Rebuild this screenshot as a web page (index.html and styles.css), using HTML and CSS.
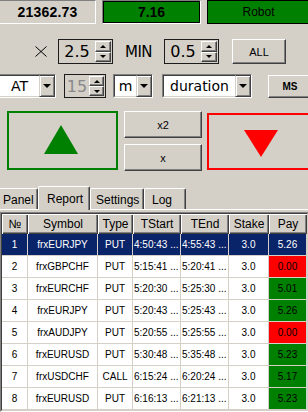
FILE: index.html
```html
<!DOCTYPE html>
<html>
<head>
<meta charset="utf-8">
<link rel="stylesheet" href="styles.css">
</head>
<body>
<div class="screen">
  <div class="row1">
    <div class="field f-bal">21362.73</div>
    <div class="field f-profit">7.16</div>
    <div class="field f-robot">Robot</div>
  </div>

  <div class="row2">
    <svg class="times" width="12" height="11" viewBox="0 0 12 11"><path d="M0.5 0.5L11.5 10.5M11.5 0.5L0.5 10.5" stroke="#000" stroke-width="1" fill="none"/></svg>
    <div class="spin s-mult">
      <span class="val">2.5</span>
      <span class="sbtns"><span class="sbtn"><i class="ar-up"></i></span><span class="sbtn"><i class="ar-dn"></i></span></span>
    </div>
    <span class="lbl">MIN</span>
    <div class="spin s-min">
      <span class="val">0.5</span>
      <span class="sbtns"><span class="sbtn"><i class="ar-up"></i></span><span class="sbtn"><i class="ar-dn"></i></span></span>
    </div>
    <div class="btn b-all">ALL</div>
  </div>

  <div class="row3">
    <div class="combo c-at"><span class="ctext">AT</span><span class="dd"><i class="ar-dd"></i></span></div>
    <div class="spin s-dur">
      <span class="val dis">15</span>
      <span class="sbtns"><span class="sbtn"><i class="ar-up"></i></span><span class="sbtn"><i class="ar-dn"></i></span></span>
    </div>
    <div class="combo c-m"><span class="ctext">m</span><span class="dd"><i class="ar-dd"></i></span></div>
    <div class="combo c-duration"><span class="ctext">duration</span><span class="dd"><i class="ar-dd"></i></span></div>
    <div class="btn b-ms">MS</div>
  </div>

  <div class="row4">
    <div class="bigbox up-box">
      <svg class="tri-up" width="34" height="29" viewBox="0 0 34 29"><polygon points="17,0 34,29 0,29" fill="#008000"/></svg>
    </div>
    <div class="mid">
      <div class="btn b-mid">x2</div>
      <div class="btn b-mid">x</div>
    </div>
    <div class="bigbox down-box">
      <svg class="tri-dn" width="34" height="27" viewBox="0 0 34 27"><polygon points="0,0 34,0 17,27" fill="#ff0000"/></svg>
    </div>
  </div>

  <div class="tabs">
    <div class="tab t-panel">Panel</div>
    <div class="tab t-report active">Report</div>
    <div class="tab t-settings">Settings</div>
    <div class="tab t-log">Log</div>
  </div>

  <div class="list">
    <div class="list-inner">
      <div class="tr head">
        <div class="th">№</div><div class="th">Symbol</div><div class="th">Type</div><div class="th">TStart</div><div class="th">TEnd</div><div class="th">Stake</div><div class="th">Pay</div>
      </div>
      <div class="tr sel">
        <div class="td">1</div><div class="td">frxEURJPY</div><div class="td">PUT</div><div class="td l">4:50:43 ...</div><div class="td l">4:55:43 ...</div><div class="td">3.0</div><div class="td">5.26</div>
      </div>
      <div class="tr">
        <div class="td">2</div><div class="td">frxGBPCHF</div><div class="td">PUT</div><div class="td l">5:15:41 ...</div><div class="td l">5:20:41 ...</div><div class="td">3.0</div><div class="td pay-loss">0.00</div>
      </div>
      <div class="tr">
        <div class="td">3</div><div class="td">frxEURCHF</div><div class="td">PUT</div><div class="td l">5:20:30 ...</div><div class="td l">5:25:30 ...</div><div class="td">3.0</div><div class="td pay-win">5.01</div>
      </div>
      <div class="tr">
        <div class="td">4</div><div class="td">frxEURJPY</div><div class="td">PUT</div><div class="td l">5:20:43 ...</div><div class="td l">5:25:43 ...</div><div class="td">3.0</div><div class="td pay-win">5.26</div>
      </div>
      <div class="tr">
        <div class="td">5</div><div class="td">frxAUDJPY</div><div class="td">PUT</div><div class="td l">5:20:55 ...</div><div class="td l">5:25:55 ...</div><div class="td">3.0</div><div class="td pay-loss">0.00</div>
      </div>
      <div class="tr">
        <div class="td">6</div><div class="td">frxEURUSD</div><div class="td">PUT</div><div class="td l">5:30:48 ...</div><div class="td l">5:35:48 ...</div><div class="td">3.0</div><div class="td pay-win">5.23</div>
      </div>
      <div class="tr">
        <div class="td">7</div><div class="td">frxUSDCHF</div><div class="td">CALL</div><div class="td l">6:15:24 ...</div><div class="td l">6:20:24 ...</div><div class="td">3.0</div><div class="td pay-win">5.17</div>
      </div>
      <div class="tr">
        <div class="td">8</div><div class="td">frxEURUSD</div><div class="td">PUT</div><div class="td l">6:16:13 ...</div><div class="td l">6:21:13 ...</div><div class="td">3.0</div><div class="td pay-win">5.23</div>
      </div>
    </div>
  </div>
</div>
</body>
</html>
```

FILE: styles.css
```css
html, body {
  margin: 0;
  padding: 0;
}
body {
  background: #d4d0c8;
  font-family: "Liberation Sans", Arial, sans-serif;
  color: #000;
  width: 308px;
  height: 412px;
  overflow: hidden;
}
.screen {
  width: 308px;
  height: 412px;
  overflow: hidden;
}

/* ---------- row 1 ---------- */
.row1 {
  display: flex;
  height: 24px;
}
.field {
  box-sizing: border-box;
  height: 24px;
  flex-shrink: 0;
  display: flex;
  align-items: center;
  justify-content: center;
}
.f-bal {
  margin-left: -1px;
  width: 97px;
  border: 1px solid;
  border-color: #808080 #fff #fff #808080;
  font-weight: bold;
  font-size: 14px;
  letter-spacing: 0.2px;
}
.f-profit {
  margin-left: 6px;
  width: 99px;
  border: 1px solid;
  border-color: #808080 #fff #fff #808080;
  box-shadow: inset 0 0 0 1px #000;
  background: #008000;
  font-weight: bold;
  font-size: 14px;
}
.f-robot {
  margin-left: 6px;
  width: 103px;
  border: 1px solid #000;
  background: #008000;
  font-size: 12px;
}

/* ---------- common controls ---------- */
.btn {
  box-sizing: border-box;
  border: 1px solid;
  border-color: #fff #404040 #404040 #fff;
  box-shadow: inset -1px -1px #808080;
  background: #d4d0c8;
  display: flex;
  align-items: center;
  justify-content: center;
  font-size: 11px;
  flex-shrink: 0;
}
.spin {
  box-sizing: border-box;
  border: 1px solid #1c1c1c;
  background: #d4d0c8;
  display: flex;
  flex-shrink: 0;
}
.spin .val {
  flex: 1;
  display: flex;
  align-items: center;
  justify-content: center;
  font-family: "DejaVu Sans", sans-serif;
  font-size: 16px;
}
.spin .val.dis {
  color: #8a8a8a;
}
.sbtns {
  width: 16px;
  display: flex;
  flex-direction: column;
  padding: 1px 1px 1px 0;
}
.sbtn {
  flex: 1;
  box-sizing: border-box;
  border: 1px solid;
  border-color: #fff #404040 #404040 #fff;
  box-shadow: inset -1px -1px #808080;
  background: #d4d0c8;
  display: flex;
  align-items: center;
  justify-content: center;
}
.ar-up, .ar-dn, .ar-dd {
  display: block;
  width: 0;
  height: 0;
}
.ar-up {
  border-left: 3px solid transparent;
  border-right: 3px solid transparent;
  border-bottom: 3px solid #000;
}
.ar-dn {
  border-left: 3px solid transparent;
  border-right: 3px solid transparent;
  border-top: 3px solid #000;
}
.ar-dd {
  border-left: 4px solid transparent;
  border-right: 4px solid transparent;
  border-top: 4px solid #000;
}
.combo {
  box-sizing: border-box;
  height: 24px;
  border: 1px solid;
  border-color: #808080 #fff #fff #808080;
  background: #fff;
  display: flex;
  flex-shrink: 0;
  position: relative;
}
.combo .ctext {
  flex: 1;
  display: flex;
  align-items: center;
  justify-content: center;
  font-family: "DejaVu Sans", sans-serif;
  font-size: 14px;
  border-top: 1px solid #404040;
  border-left: 1px solid #404040;
  border-bottom: 1px solid #d4d0c8;
}
.combo .dd {
  box-sizing: border-box;
  width: 16px;
  border: 1px solid;
  border-color: #d4d0c8 #404040 #404040 #d4d0c8;
  box-shadow: inset 1px 1px #fff, inset -1px -1px #808080;
  background: #d4d0c8;
  display: flex;
  align-items: center;
  justify-content: center;
  border-top-color: #404040;
  margin-top: 0;
}

/* ---------- row 2 ---------- */
.row2 {
  display: flex;
  align-items: center;
  margin-top: 15px;
  height: 25px;
  padding-left: 35px;
}
.times {
  display: block;
  flex-shrink: 0;
}
.s-mult {
  margin-left: 11px;
  width: 55px;
  height: 25px;
}
.lbl {
  margin-left: 12px;
  width: 28px;
  font-family: "DejaVu Sans", sans-serif;
  font-size: 15px;
  letter-spacing: -0.5px;
  flex-shrink: 0;
}
.s-min {
  margin-left: 11px;
  width: 55px;
  height: 25px;
}
.b-all {
  margin-left: 13px;
  width: 54px;
  height: 25px;
}

/* ---------- row 3 ---------- */
.row3 {
  display: flex;
  align-items: flex-start;
  margin-top: 10px;
  height: 24px;
  margin-left: -2px;
}
.c-at {
  width: 58px;
}
.s-dur {
  margin-left: 8px;
  width: 42px;
  height: 24px;
}
.s-dur .sbtns {
  width: 15px;
}
.c-m {
  margin-left: 7px;
  width: 40px;
}
.c-duration {
  margin-left: 9px;
  width: 90px;
}
.b-ms {
  margin-left: 16px;
  margin-top: 1px;
  width: 44px;
  height: 23px;
  font-size: 10px;
  font-weight: bold;
}

/* ---------- row 4 ---------- */
.row4 {
  display: flex;
  align-items: flex-start;
  margin-top: 13px;
  padding-left: 7px;
  height: 60px;
}
.bigbox {
  box-sizing: border-box;
  flex-shrink: 0;
  display: flex;
  align-items: center;
  justify-content: center;
}
.up-box {
  width: 111px;
  height: 59px;
  border: 2px solid #008000;
}
.tri-up {
  display: block;
  margin-right: 4px;
  margin-top: -3px;
}
.mid {
  margin-left: 6px;
  width: 78px;
  display: flex;
  flex-direction: column;
  gap: 6px;
  flex-shrink: 0;
}
.b-mid {
  width: 78px;
  height: 27px;
}
.down-box {
  margin-left: 5px;
  margin-top: 2px;
  width: 107px;
  height: 57px;
  border: 2px solid #ff0000;
}
.tri-dn {
  display: block;
  margin-top: 3px;
}

/* ---------- tabs ---------- */
.tabs {
  display: flex;
  align-items: flex-end;
  margin-top: 15px;
  margin-left: -2px;
  height: 23px;
  border-bottom: 1px solid #fff;
}
.tab {
  box-sizing: border-box;
  height: 21px;
  border-top: 1px solid #fff;
  border-left: 1px solid #fff;
  border-right: 1px solid #404040;
  box-shadow: inset -1px 0 #808080;
  border-radius: 2px 2px 0 0;
  font-size: 12px;
  padding-top: 4px;
  flex-shrink: 0;
  background: #d4d0c8;
}
.t-panel {
  width: 40px;
  padding-left: 4px;
}
.t-report {
  width: 52px;
  padding-left: 8px;
}
.t-settings {
  width: 54px;
  padding-left: 5px;
}
.t-log {
  width: 42px;
  padding-left: 7px;
}
.tab.active {
  height: 24px;
  margin-bottom: -1px;
  position: relative;
  z-index: 1;
  padding-top: 5px;
}

/* ---------- list ---------- */
.list {
  margin-top: 2px;
  width: 309px;
  height: 200px;
  box-sizing: border-box;
  border: 1px solid;
  border-color: #808080 #fff #fff #808080;
}
.list-inner {
  box-sizing: border-box;
  height: 198px;
  border: 1px solid;
  border-color: #404040 #d4d0c8 #d4d0c8 #404040;
  background: #fff;
  overflow: hidden;
}
.tr {
  display: grid;
  grid-template-columns: 26px 70px 35px 48px 48px 40px 38px;
  height: 22px;
}
.tr.head {
  height: 20px;
}
.th {
  box-sizing: border-box;
  background: #d4d0c8;
  box-shadow: inset 1px 1px #fff, inset -1px -1px #404040, inset -2px -2px #808080;
  font-size: 12px;
  display: flex;
  align-items: center;
  justify-content: center;
  padding-bottom: 1px;
}
.td {
  box-sizing: border-box;
  border-right: 1px solid #d4d0c8;
  border-bottom: 1px solid #d4d0c8;
  font-size: 10px;
  display: flex;
  align-items: center;
  justify-content: center;
  white-space: nowrap;
  overflow: hidden;
}
.td.l {
  justify-content: flex-start;
  padding-left: 1px;
}
.tr.sel .td {
  background: #0a246a;
  color: #fff;
}
.pay-win {
  background: #008000;
}
.pay-loss {
  background: #ff0000;
}
```
